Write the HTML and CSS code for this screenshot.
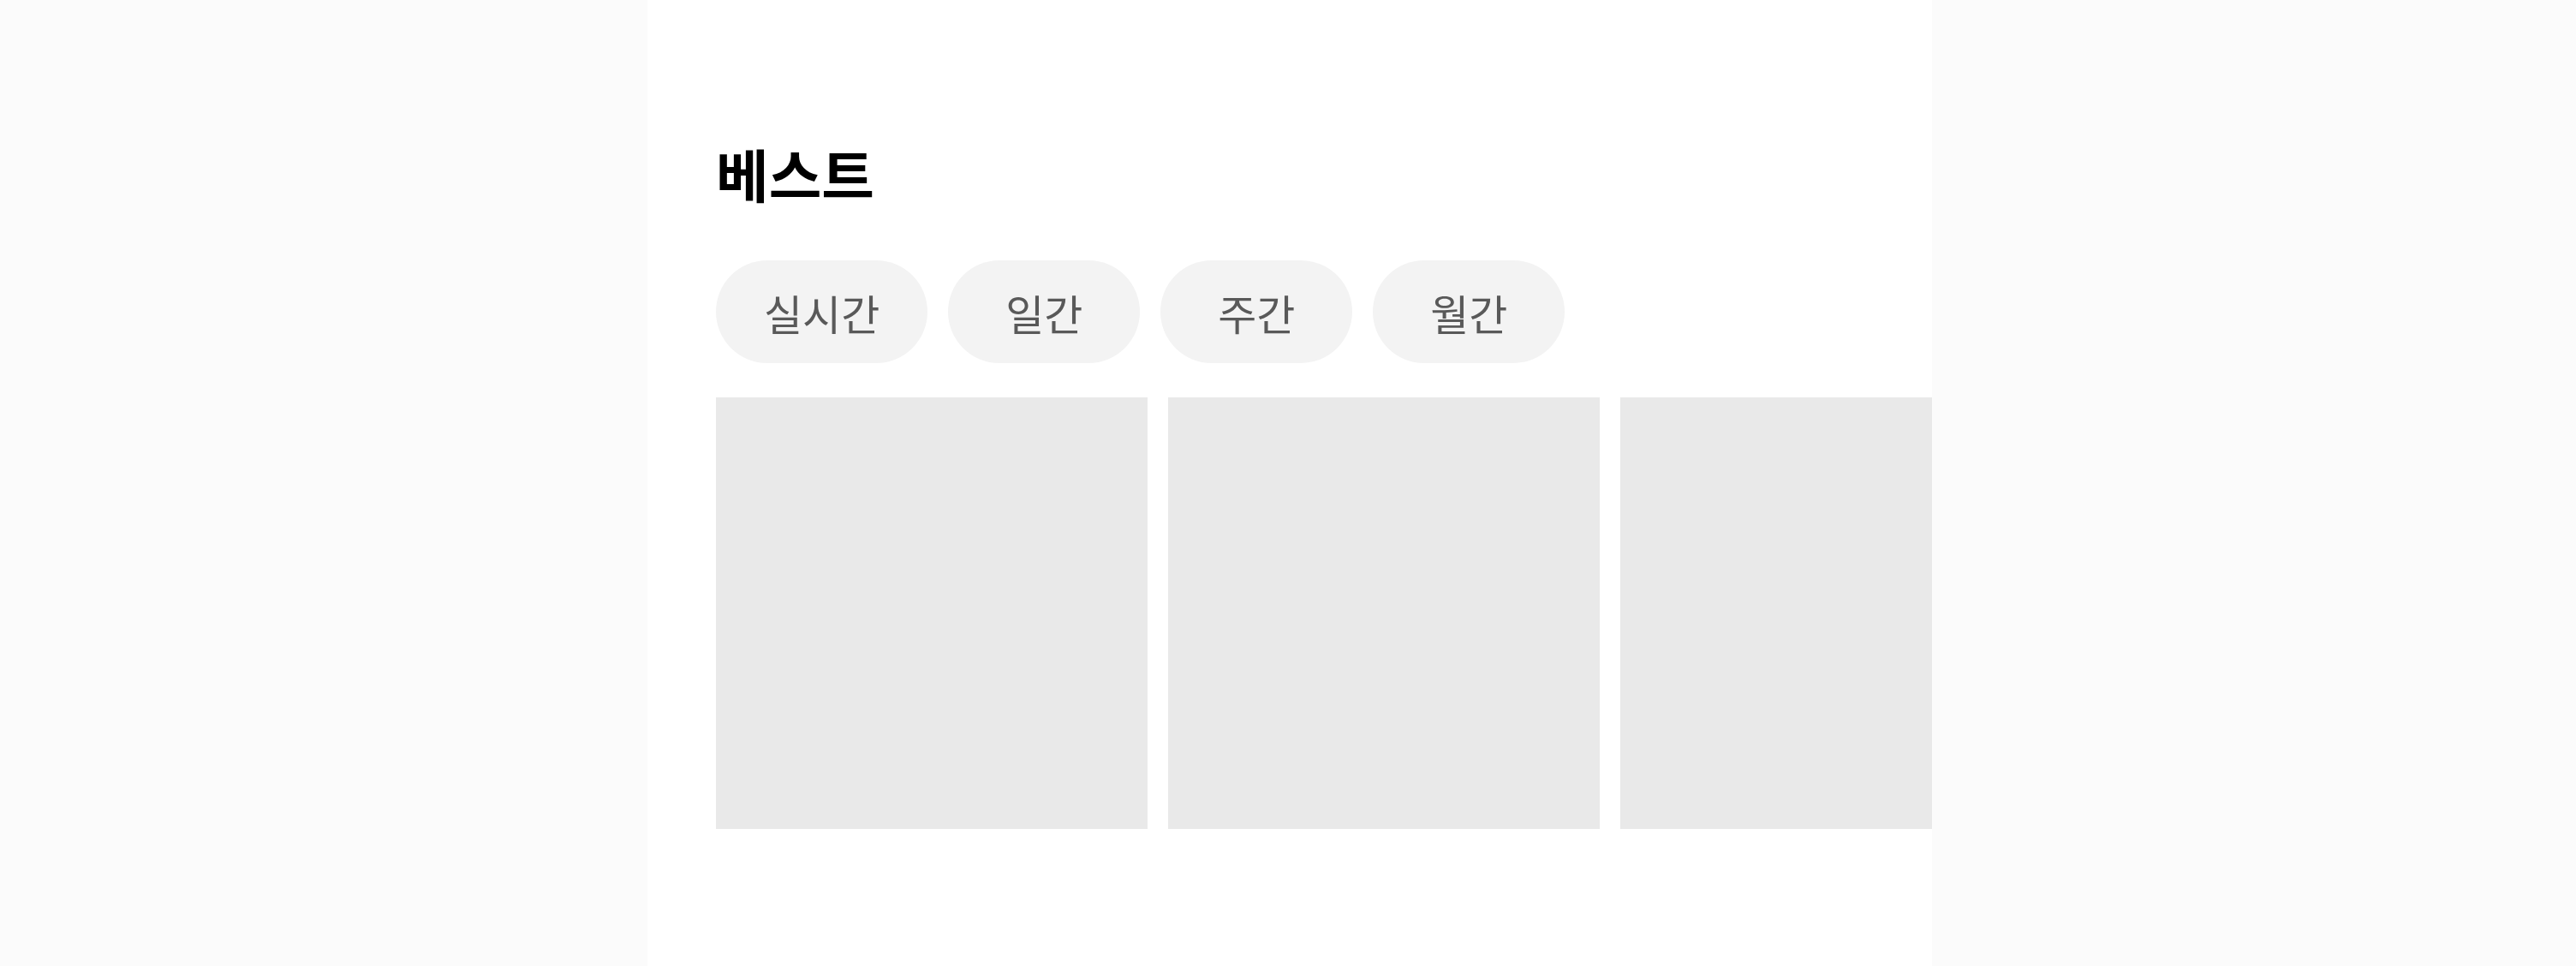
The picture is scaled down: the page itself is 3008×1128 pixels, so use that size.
FILE: index.html
```html
<!DOCTYPE html>
<html lang="ko">
<head>
<meta charset="utf-8">
<title>베스트</title>
<link rel="stylesheet" href="styles.css">
</head>
<body>
<main class="page">
  <h1 class="title">베스트</h1>
  <div class="tabs">
    <button class="tab">실시간</button>
    <button class="tab">일간</button>
    <button class="tab">주간</button>
    <button class="tab">월간</button>
  </div>
  <div class="cards">
    <div class="card"></div>
    <div class="card"></div>
    <div class="card"></div>
    <div class="card"></div>
  </div>
</main>
</body>
</html>
```
FILE: styles.css
```css
html, body {
  margin: 0;
  padding: 0;
  height: 100%;
}
body {
  background: #fbfbfb;
  font-family: "Noto Sans CJK KR", "Noto Sans", sans-serif;
}
.page {
  width: 1500px;
  min-height: 100%;
  margin: 0 0 0 calc(50% - 748px);
  background: #ffffff;
  box-sizing: border-box;
  padding: 168px 0 0 80px;
  overflow: hidden;
}
.title {
  margin: 0 0 69px;
  font-size: 67px;
  line-height: 1;
  font-weight: 700;
  color: #000;
}
.tabs {
  display: flex;
  gap: 24px;
  margin-bottom: 40px;
}
.tab {
  height: 120px;
  min-width: 224px;
  padding: 0 56px;
  border: 0;
  border-radius: 60px;
  background: #f3f3f3;
  color: #595959;
  font-family: inherit;
  font-size: 49px;
  font-weight: 400;
  line-height: 1;
  box-sizing: border-box;
}
.cards {
  display: flex;
  gap: 24px;
}
.card {
  flex: 0 0 504px;
  height: 504px;
  background: #e9e9e9;
}
```
